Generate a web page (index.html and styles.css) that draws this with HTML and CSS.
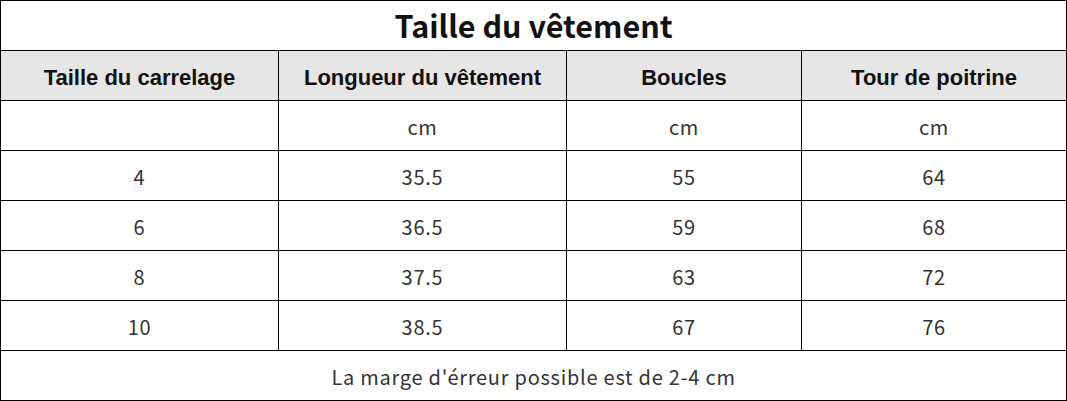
FILE: index.html
```html
<!DOCTYPE html>
<html lang="fr">
<head>
<meta charset="utf-8">
<link rel="stylesheet" href="styles.css">
</head>
<body>
<table class="size-table">
  <colgroup>
    <col class="c1"><col class="c2"><col class="c3"><col class="c4">
  </colgroup>
  <tr class="title-row"><td colspan="4">Taille du vêtement</td></tr>
  <tr class="head-row">
    <th>Taille du carrelage</th>
    <th>Longueur du vêtement</th>
    <th>Boucles</th>
    <th>Tour de poitrine</th>
  </tr>
  <tr><td></td><td>cm</td><td>cm</td><td>cm</td></tr>
  <tr><td>4</td><td>35.5</td><td>55</td><td>64</td></tr>
  <tr><td>6</td><td>36.5</td><td>59</td><td>68</td></tr>
  <tr><td>8</td><td>37.5</td><td>63</td><td>72</td></tr>
  <tr><td>10</td><td>38.5</td><td>67</td><td>76</td></tr>
  <tr class="foot-row"><td colspan="4">La marge d'érreur possible est de 2-4 cm</td></tr>
</table>
</body>
</html>
```

FILE: styles.css
```css
html, body {
  margin: 0;
  padding: 0;
  background: #fff;
}
.size-table {
  border-collapse: collapse;
  width: 1066px;
  table-layout: fixed;
  font-family: "Noto Sans CJK SC", "Noto Sans", sans-serif;
  color: #333;
}
.c1 { width: 278px; }
.c2 { width: 288px; }
.c3 { width: 235px; }
.c4 { width: 265px; }
.size-table tr {
  height: 50px;
}
.size-table td, .size-table th {
  border: 1px solid #000;
  padding: 2px 0 0;
  text-align: center;
  vertical-align: middle;
  font-size: 20px;
  font-weight: 400;
  letter-spacing: 0.75px;
  line-height: 1;
}
.title-row td {
  font-size: 30.5px;
  font-weight: 700;
  letter-spacing: 0;
  color: #111;
  padding: 0;
}
.head-row th {
  background: #e6e6e6;
  font-family: "Liberation Sans", Arial, sans-serif;
  font-size: 22px;
  font-weight: 700;
  letter-spacing: 0;
  color: #111;
  padding-top: 4px;
}
```
